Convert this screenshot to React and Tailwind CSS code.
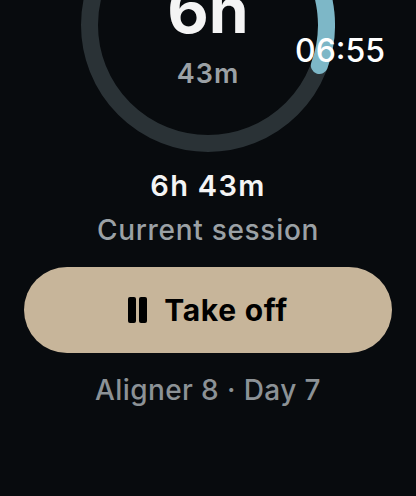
import { Pause } from "lucide-react";

const FONT = { fontFamily: "Inter, 'Noto Sans', sans-serif" };

// ring geometry: 254px box, mid radius 118.5, progress 110deg
function Ring() {
  return (
    <svg viewBox="0 0 254 254" className="absolute inset-0 w-full h-full">
      <circle cx="127" cy="127" r="118.5" fill="none" stroke="#2a3236" strokeWidth="17" />
      <path
        d="M127 8.5 A118.5 118.5 0 0 1 238.35 167.53"
        fill="none"
        stroke="#7db7c7"
        strokeWidth="17"
        strokeLinecap="round"
      />
    </svg>
  );
}

export default function App() {
  return (
    <div
      className="relative w-full h-[496px] overflow-hidden bg-[#080b0e] flex flex-col items-center"
      style={FONT}
    >
      {/* Ring */}
      <div className="relative -mt-[102px] w-[254px] h-[254px] shrink-0 flex flex-col items-center">
        <Ring />
        <div className="relative pt-[80px] flex flex-col items-center">
          <span className="text-[64px] leading-none font-bold text-[#f4f4f4] tracking-[0px]">6h</span>
          <span className="mt-[18px] text-[27px] leading-none font-semibold text-[#9ba1a5] tracking-[1px]">43m</span>
        </div>
      </div>

      {/* Clock */}
      <span className="absolute top-[35px] left-[295px] text-[32px] leading-none font-medium text-white">
        06:55
      </span>

      <p className="mt-[19px] text-[29px] leading-none font-semibold text-[#f4f4f4] tracking-[1.3px]">6h 43m</p>
      <p className="mt-[16px] text-[28px] leading-none font-medium text-[#9ba1a5] tracking-[0.7px]">Current session</p>

      <button className="mt-[23px] w-[368px] h-[86px] shrink-0 rounded-full bg-[#c7b59a] flex items-center justify-center gap-[17px]">
        <span className="flex gap-[3px]">
          <span className="w-[8px] h-[26px] rounded-[2px] bg-black" />
          <span className="w-[8px] h-[26px] rounded-[2px] bg-black" />
        </span>
        <span className="text-[30px] leading-none font-bold text-black tracking-[0.7px]">Take off</span>
      </button>

      <p className="mt-[23px] text-[28px] leading-none font-medium text-[#8c9296] tracking-[0.4px]">Aligner 8 · Day 7</p>
    </div>
  );
}
